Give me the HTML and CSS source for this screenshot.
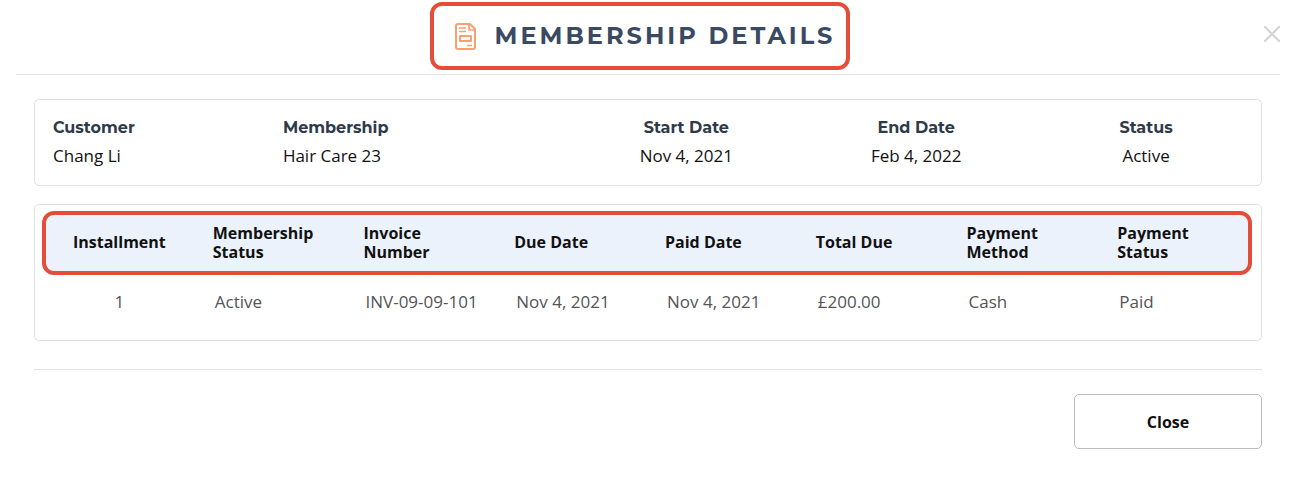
FILE: index.html
```html
<!DOCTYPE html>
<html lang="en">
<head>
  <meta charset="UTF-8">
  <meta name="viewport" content="width=device-width, initial-scale=1.0">
  <title>Membership Details</title>
  <link rel="stylesheet" href="styles.css">
</head>
<body>

  <div class="modal" role="dialog" aria-labelledby="modal-title">

    <header class="modal-header">
      <div class="modal-heading">
        <svg class="modal-icon" viewBox="0 0 22 28" fill="none" stroke="#f9a06f" stroke-width="2" stroke-linejoin="round" aria-hidden="true">
          <path d="M3 2h12l5 5v18a2 2 0 0 1-2 2H3a2 2 0 0 1-2-2V4a2 2 0 0 1 2-2z"/>
          <path d="M14 2v6h6M4 6h7M4 9.500h7M12 23.500h5" stroke-width="1.700"/>
          <path d="M5 14h11v5H5z"/>
        </svg>
        <h1 class="modal-title" id="modal-title">MEMBERSHIP DETAILS</h1>
      </div>
      <button class="close-icon" type="button" aria-label="Close">
        <svg viewBox="0 0 16 16" fill="none" stroke="#d3d3d3" stroke-width="2"><path d="M0 0l16 16M16 0L0 16"/></svg>
      </button>
    </header>

    <main class="modal-body">

      <dl class="card summary">
        <div class="summary-item">
          <dt>Customer</dt>
          <dd>Chang Li</dd>
        </div>
        <div class="summary-item">
          <dt>Membership</dt>
          <dd>Hair Care 23</dd>
        </div>
        <div class="summary-item centered">
          <dt>Start Date</dt>
          <dd>Nov 4, 2021</dd>
        </div>
        <div class="summary-item centered">
          <dt>End Date</dt>
          <dd>Feb 4, 2022</dd>
        </div>
        <div class="summary-item centered">
          <dt>Status</dt>
          <dd>Active</dd>
        </div>
      </dl>

      <div class="card table-card">
        <table class="installments">
          <thead>
            <tr>
              <th>Installment</th>
              <th>Membership Status</th>
              <th>Invoice<br>Number</th>
              <th>Due Date</th>
              <th>Paid Date</th>
              <th>Total Due</th>
              <th>Payment<br>Method</th>
              <th>Payment<br>Status</th>
            </tr>
          </thead>
          <tbody>
            <tr>
              <td>1</td>
              <td>Active</td>
              <td>INV-09-09-101</td>
              <td>Nov 4, 2021</td>
              <td>Nov 4, 2021</td>
              <td>£200.00</td>
              <td>Cash</td>
              <td>Paid</td>
            </tr>
          </tbody>
        </table>
      </div>

      <footer class="modal-footer">
        <button class="close-button" type="button">Close</button>
      </footer>

    </main>
  </div>

</body>
</html>
```
FILE: styles.css
```css
*,
*::after {
  box-sizing: border-box;
}

body {
  margin: 0;
  background: #fff;
  color: #111;
  font-family: "Open Sans", sans-serif;
  font-size: 16px;
}

.modal {
  padding: 0 14px 0 16px;
}

/* Header */
.modal-header {
  display: flex;
  align-items: center;
  padding-top: 2px;
  padding-bottom: 4px;
  border-bottom: 1px solid #e6e6e6;
}

.modal-heading {
  display: flex;
  align-items: center;
  gap: 18px;
  height: 68px;
  margin: 0 auto;
  padding: 0 11px 0 21px;
  border: 4px solid #e44d3a;
  border-radius: 12px;
}

.modal-icon {
  width: 22px;
  height: 28px;
}

.modal-title {
  margin: 0;
  color: #3b4a63;
  font-family: Montserrat, Inter, sans-serif;
  font-size: 24px;
  font-weight: 700;
  letter-spacing: 3px;
  line-height: 32px;
}

.close-icon {
  width: 16px;
  padding: 0 0 4px;
  border: 0;
  background: none;
  cursor: pointer;
}

.close-icon svg {
  display: block;
  width: 16px;
  height: 16px;
}

/* Body */
.modal-body {
  padding: 24px 18px;
}

.card {
  margin: 0 0 18px;
  border: 1px solid #e2e2e2;
  border-radius: 5px;
}

.summary {
  display: grid;
  grid-template-columns: 3fr 4fr 3fr 3fr 3fr;
  padding: 14px 0 15px;
}

.summary-item {
  padding-left: 18px;
  line-height: 28px;
}

.summary-item.centered {
  padding-left: 0;
  text-align: center;
}

.summary-item dt {
  color: #2f3a48;
  font-family: Montserrat, Inter, sans-serif;
  font-weight: 700;
}

.summary-item dd {
  margin: 0;
  font-size: 17px;
}

/* Installments table */
.table-card {
  position: relative;
  margin-bottom: 28px;
  padding: 7px 11px 11px 9px;
}

/* red frame round the column headings */
.table-card::after {
  content: "";
  position: absolute;
  top: 6px;
  left: 7px;
  right: 9px;
  height: 64px;
  border: 4px solid #e44d3a;
  border-radius: 12px;
  pointer-events: none;
}

.installments {
  width: 100%;
  table-layout: fixed;
  border-spacing: 0;
}

.installments th {
  height: 61px;
  padding: 0 18px;
  background: #ebf2fc;
  color: #111;
  font-weight: 700;
  line-height: 19px;
  text-align: left;
}

.installments td {
  height: 56px;
  padding: 0 20px;
  color: #555;
  font-size: 17px;
  white-space: nowrap;
}

.installments th:first-child {
  border-radius: 10px 0 0 10px;
  text-align: center;
}

.installments th:last-child {
  border-radius: 0 10px 10px 0;
}

.installments td:first-child {
  text-align: center;
}

/* Footer */
.modal-footer {
  display: flex;
  justify-content: flex-end;
  padding-top: 24px;
  border-top: 1px solid #e2e2e2;
}

.close-button {
  min-width: 188px;
  height: 55px;
  border: 1px solid #bbb;
  border-radius: 5px;
  background: #fff;
  color: #111;
  font: 700 16px "Open Sans", sans-serif;
  cursor: pointer;
}
```
